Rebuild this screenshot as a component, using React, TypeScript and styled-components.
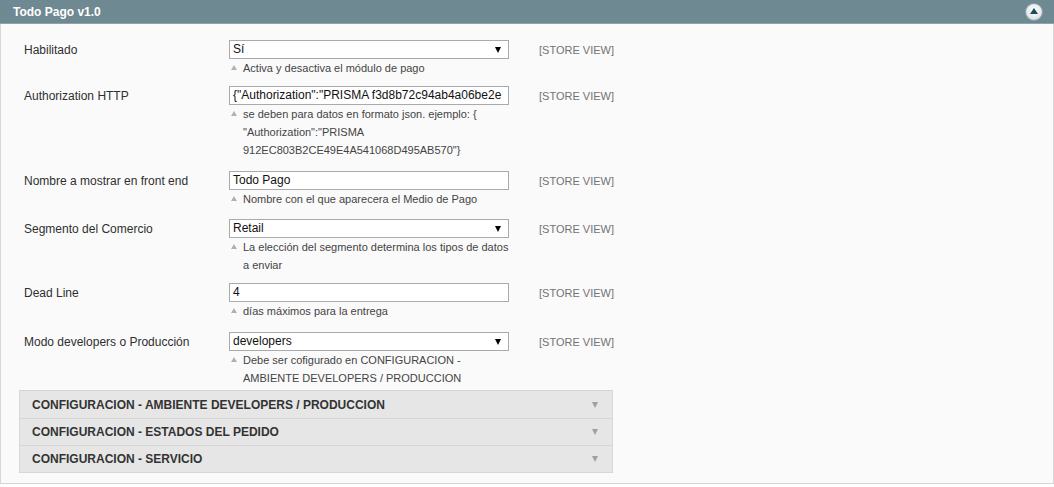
import React from "react";
import styled, { createGlobalStyle } from "styled-components";

const GlobalStyle = createGlobalStyle`
  html, body {
    margin: 0;
    padding: 0;
    background: #ffffff;
    font-family: "Liberation Sans", Arial, sans-serif;
  }
`;

const Section = styled.div`
  width: 1054px;
`;

const Header = styled.div`
  height: 24px;
  display: flex;
  align-items: center;
  justify-content: space-between;
  padding: 0 10px 0 13px;
  box-sizing: border-box;
  background: #6f8992;
  border-bottom: 1px solid #8ea3aa;
`;

const Title = styled.span`
  color: #ffffff;
  font-size: 12px;
  font-weight: bold;
`;

const CollapseButton = styled.div`
  width: 16px;
  height: 16px;
  border-radius: 50%;
  background: radial-gradient(circle at 50% 40%, #ffffff 0%, #e4e8ea 60%, #b9c4c8 100%);
  box-shadow: 0 0 0 1px #8ea3aa;
  display: flex;
  align-items: center;
  justify-content: center;
  margin-right: 2px;
`;

const UpArrow = styled.div`
  width: 0;
  height: 0;
  border-left: 4px solid transparent;
  border-right: 4px solid transparent;
  border-bottom: 6px solid #1f4a5c;
  margin-top: -1px;
`;

const Body = styled.div`
  background: #fafafa;
  border: 1px solid #d6d6d6;
  border-top: none;
  padding: 11px 18px 11px 18px;
  height: 460px;
  box-sizing: border-box;
`;

const Row = styled.div<{ $extra?: number }>`
  display: flex;
  align-items: flex-start;
  padding: 5px 0 ${({ $extra }) => 5 + ($extra || 0)}px 5px;
`;

const Label = styled.div`
  width: 205px;
  flex: none;
  font-size: 12px;
  color: #2f2f2f;
  line-height: 18px;
  padding-top: 1px;
`;

const Value = styled.div`
  width: 280px;
  flex: none;
`;

const Scope = styled.div`
  margin-left: 30px;
  font-size: 11px;
  color: #737373;
  line-height: 18px;
  padding-top: 1px;
`;

const Field = styled.div`
  position: relative;
  height: 19px;
  box-sizing: border-box;
  border: 1px solid #aaaaaa;
  background: #ffffff;
  font-size: 12px;
  line-height: 17px;
  color: #111111;
  padding: 0 3px;
  white-space: nowrap;
  overflow: hidden;
`;

const SelectArrow = styled.div`
  position: absolute;
  right: 7px;
  top: 6px;
  width: 0;
  height: 0;
  border-left: 3px solid transparent;
  border-right: 3px solid transparent;
  border-top: 6px solid #000000;
`;

const Hint = styled.div`
  display: flex;
  font-size: 11px;
  line-height: 18px;
  color: #444444;
`;

const HintMark = styled.div`
  width: 0;
  height: 0;
  flex: none;
  border-left: 3px solid transparent;
  border-right: 3px solid transparent;
  border-bottom: 5px solid #aab4b8;
  margin: 6px 6px 0 2px;
`;

const HintText = styled.div`
  white-space: pre-line;
`;

const Groups = styled.div`
  width: 594px;
  border: 1px solid #d6d6d6;
  box-sizing: border-box;
`;

const Group = styled.div`
  height: 27px;
  box-sizing: border-box;
  display: flex;
  align-items: center;
  justify-content: space-between;
  padding: 0 12px;
  background: #e6e6e6;
  border-top: 1px solid #d6d6d6;
  &:first-child {
    border-top: none;
  }
`;

const GroupTitle = styled.span`
  font-size: 12px;
  font-weight: bold;
  color: #333333;
`;

const DownArrow = styled.div`
  width: 0;
  height: 0;
  border-left: 3px solid transparent;
  border-right: 3px solid transparent;
  border-top: 6px solid #a0a0a0;
  margin-right: 2px;
`;

type FieldRow = {
  label: string;
  value: string;
  select?: boolean;
  hint: string;
  extra?: number;
};

const rows: FieldRow[] = [
  { label: "Habilitado", value: "Sí", select: true, hint: "Activa y desactiva el módulo de pago", extra: -1 },
  {
    label: "Authorization HTTP",
    value: '{"Authorization":"PRISMA f3d8b72c94ab4a06be2e',
    hint: 'se deben para datos en formato json. ejemplo: {\n"Authorization":"PRISMA\n912EC803B2CE49E4A541068D495AB570"}',
    extra: 2,
  },
  { label: "Nombre a mostrar en front end", value: "Todo Pago", hint: "Nombre con el que aparecera el Medio de Pago", extra: 1 },
  {
    label: "Segmento del Comercio",
    value: "Retail",
    select: true,
    hint: "La elección del segmento determina los tipos de datos\na enviar",
    extra: -1,
  },
  { label: "Dead Line", value: "4", hint: "días máximos para la entrega", extra: 2 },
  {
    label: "Modo developers o Producción",
    value: "developers",
    select: true,
    hint: "Debe ser cofigurado en CONFIGURACION -\nAMBIENTE DEVELOPERS / PRODUCCION",
    extra: -2,
  },
];

const groups = [
  "CONFIGURACION - AMBIENTE DEVELOPERS / PRODUCCION",
  "CONFIGURACION - ESTADOS DEL PEDIDO",
  "CONFIGURACION - SERVICIO",
];

export default function App() {
  return (
    <Section>
      <GlobalStyle />
      <Header>
        <Title>Todo Pago v1.0</Title>
        <CollapseButton>
          <UpArrow />
        </CollapseButton>
      </Header>
      <Body>
        {rows.map((r) => (
          <Row key={r.label} $extra={r.extra}>
            <Label>{r.label}</Label>
            <Value>
              <Field>
                {r.value}
                {r.select && <SelectArrow />}
              </Field>
              <Hint>
                <HintMark />
                <HintText>{r.hint}</HintText>
              </Hint>
            </Value>
            <Scope>[STORE VIEW]</Scope>
          </Row>
        ))}
        <Groups>
          {groups.map((g) => (
            <Group key={g}>
              <GroupTitle>{g}</GroupTitle>
              <DownArrow />
            </Group>
          ))}
        </Groups>
      </Body>
    </Section>
  );
}
